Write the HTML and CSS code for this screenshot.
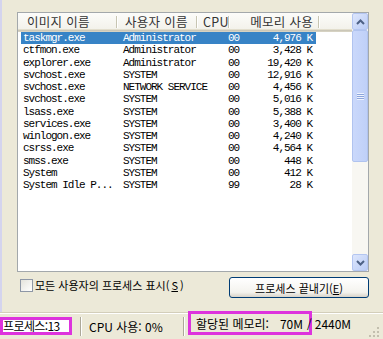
FILE: index.html
```html
<!DOCTYPE html>
<html lang="ko">
<head>
    <meta charset="UTF-8">
    <title>Windows 작업 관리자</title>
    <link rel="stylesheet" href="styles.css">
</head>
<body>

<div class="window">
    <div class="main">
        <!-- 프로세스 목록 -->
        <div class="list">
            <div class="list-body">
                <div class="header">
                    <div class="hcell c1">이미지 이름</div>
                    <div class="hcell c2">사용자 이름</div>
                    <div class="hcell c3">CPU</div>
                    <div class="hcell c4">메모리 사용</div>
                    <div class="hcell filler"></div>
                </div>
                <div class="rows">
                    <div class="row selected"><span>taskmgr.exe</span><span>Administrator</span><span>00</span><span class="mem">4,976 K</span></div>
                    <div class="row"><span>ctfmon.exe</span><span>Administrator</span><span>00</span><span class="mem">3,428 K</span></div>
                    <div class="row"><span>explorer.exe</span><span>Administrator</span><span>00</span><span class="mem">19,420 K</span></div>
                    <div class="row"><span>svchost.exe</span><span>SYSTEM</span><span>00</span><span class="mem">12,916 K</span></div>
                    <div class="row"><span>svchost.exe</span><span>NETWORK SERVICE</span><span>00</span><span class="mem">4,456 K</span></div>
                    <div class="row"><span>svchost.exe</span><span>SYSTEM</span><span>00</span><span class="mem">5,016 K</span></div>
                    <div class="row"><span>lsass.exe</span><span>SYSTEM</span><span>00</span><span class="mem">5,388 K</span></div>
                    <div class="row"><span>services.exe</span><span>SYSTEM</span><span>00</span><span class="mem">3,400 K</span></div>
                    <div class="row"><span>winlogon.exe</span><span>SYSTEM</span><span>00</span><span class="mem">4,240 K</span></div>
                    <div class="row"><span>csrss.exe</span><span>SYSTEM</span><span>00</span><span class="mem">4,564 K</span></div>
                    <div class="row"><span>smss.exe</span><span>SYSTEM</span><span>00</span><span class="mem">448 K</span></div>
                    <div class="row"><span>System</span><span>SYSTEM</span><span>00</span><span class="mem">412 K</span></div>
                    <div class="row"><span>System Idle P...</span><span>SYSTEM</span><span>99</span><span class="mem">28 K</span></div>
                </div>
            </div>
            <!-- 스크롤바 -->
            <div class="scrollbar">
                <div class="sb-btn">
                    <svg width="9" height="6" viewBox="0 0 9 6"><path d="M1 5 L4.5 1.5 L8 5" fill="none" stroke="#4D6185" stroke-width="2"/></svg>
                </div>
                <div class="sb-thumb">
                    <div class="grip"></div>
                </div>
                <div class="sb-track"></div>
                <div class="sb-btn">
                    <svg width="9" height="6" viewBox="0 0 9 6"><path d="M1 1 L4.5 4.5 L8 1" fill="none" stroke="#4D6185" stroke-width="2"/></svg>
                </div>
            </div>
        </div>

        <div class="controls">
            <label class="check"><span class="box"></span>모든 사용자의 프로세스 표시(<u>S</u>)</label>
            <button class="end-button">프로세스 끝내기(<u>E</u>)</button>
        </div>
    </div>

    <!-- 상태 표시줄 -->
    <div class="statusbar">
        <div class="panel p1"><span class="mark mark1">프로세스:13</span></div>
        <div class="sep"></div>
        <div class="panel p2">CPU 사용: 0%</div>
        <div class="sep"></div>
        <div class="panel p3">
            <span class="mark mark2"><span>할당된 메모리:</span><span>70M</span></span>
            <span class="slash">/</span>
            <span class="total">2440M</span>
        </div>
        <svg class="grip-corner" width="12" height="12" viewBox="0 0 12 12">
            <rect x="9" y="1" width="2" height="2" fill="#C3BFAE"/>
            <rect x="5" y="5" width="2" height="2" fill="#C3BFAE"/>
            <rect x="9" y="5" width="2" height="2" fill="#C3BFAE"/>
            <rect x="1" y="9" width="2" height="2" fill="#C3BFAE"/>
            <rect x="5" y="9" width="2" height="2" fill="#C3BFAE"/>
            <rect x="9" y="9" width="2" height="2" fill="#C3BFAE"/>
        </svg>
    </div>
</div>

</body>
</html>
```

FILE: styles.css
```css
/* General */
* {
    margin: 0;
    padding: 0;
    box-sizing: border-box;
}
body {
    font-family: "Noto Sans CJK KR", sans-serif;
    font-size: 11px;
    color: #000;
    background-color: #ECE9D8;
    width: 383px;
    height: 339px;
    overflow: hidden;
}
.window {
    height: 339px;
    display: flex;
    flex-direction: column;
}
.main {
    flex: 1;
    border-left: 2px solid #D4D4EE;
    padding: 12px 0 0 15px;
}

/* Lista */
.list {
    width: 352px;
    height: 260px;
    display: flex;
    background: #fff;
    border: 1px solid #A3A8AB;
}
.list-body {
    flex: 1;
    overflow: hidden;
}
.header {
    display: flex;
    height: 19px;
    background: linear-gradient(#FCFCFA, #F1F0E8);
    box-shadow: inset 0 -1px #D6D2C2, inset 0 -2px #CBC7B8, inset 0 -3px #E2DECD;
}
.hcell {
    position: relative;
    font-size: 12.5px;
    letter-spacing: 0.3px;
    line-height: 18px;
    color: #333;
    white-space: nowrap;
}
.hcell::after {
    content: "";
    position: absolute;
    right: 0;
    top: 3px;
    bottom: 4px;
    width: 1px;
    background: #C7C5B2;
    box-shadow: 1px 0 #fff;
}
.hcell.filler::after {
    display: none;
}
.c1 { width: 99px; padding-left: 9px; }
.c2 { width: 80px; padding-left: 8px; }
.c3 { width: 32px; padding-left: 6px; }
.c4 { width: 90px; padding-right: 6px; text-align: right; }
.filler { flex: 1; }

.rows {
    padding-left: 3px;
}
.row {
    width: 295px;
    height: 12.25px;
    display: grid;
    grid-template-columns: 102px 105px 23px 65px;
    font-family: "Liberation Mono", monospace;
    font-size: 11px;
    letter-spacing: -1px;
    line-height: 12px;
    white-space: nowrap;
}
.row span:first-child {
    padding-left: 2px;
}
.row .mem {
    text-align: right;
    padding-right: 4px;
}
.row.selected {
    background-color: #3783C6;
    color: #fff;
}

/* Scrollbar */
.scrollbar {
    width: 16px;
    display: flex;
    flex-direction: column;
    background: #F8F7F2;
}
.sb-btn {
    height: 17px;
    display: flex;
    align-items: center;
    justify-content: center;
    background: linear-gradient(135deg, #DDE6FC, #BBCDF6);
    border: 1px solid #B4C6F1;
    border-radius: 2px;
}
.sb-thumb {
    height: 132px;
    display: flex;
    align-items: center;
    justify-content: center;
    background: linear-gradient(90deg, #CAD8FB, #BFD0F8);
    border: 1px solid #B0C3EF;
    border-radius: 2px;
}
.grip {
    width: 7px;
    height: 7px;
    background: repeating-linear-gradient(#EEF3FE 0 1px, #8CA5DC 1px 2px);
}
.sb-track {
    flex: 1;
}

/* Controles */
.controls {
    width: 352px;
    height: 21px;
    margin-top: 5px;
    display: flex;
    justify-content: space-between;
}
.check {
    display: flex;
    align-items: center;
    gap: 2px;
    padding-left: 3px;
    margin-top: 1px;
    height: 14px;
    line-height: 14px;
}
.box {
    width: 13px;
    height: 13px;
    border: 1px solid #8E97A6;
    background: linear-gradient(135deg, #E4E3DC, #FFFFFF);
}
.end-button {
    width: 140px;
    height: 21px;
    font-family: inherit;
    font-size: 11px;
    border: 1px solid #003C74;
    border-radius: 3px;
    background: linear-gradient(#FFFFFF, #F4F3EE 75%, #D8D3C8);
}

/* Barra de estado */
.statusbar {
    height: 27px;
    display: flex;
    align-items: center;
    font-size: 12px;
    border-top: 1px solid #D3CEBA;
    box-shadow: inset 0 1px #fff;
}
.panel {
    white-space: nowrap;
}
.p1 {
    width: 80px;
}
.p2 {
    width: 101px;
    padding-left: 7px;
}
.p3 {
    display: flex;
    align-items: center;
    padding-left: 3px;
    align-self: flex-start;
    margin-top: -2px;
}
.sep {
    width: 2px;
    height: 19px;
    border-left: 1px solid #ACA899;
    border-right: 1px solid #fff;
}
.mark {
    display: flex;
    align-items: center;
    background: #fff;
    border: 3px solid #DD33DD;
}
.mark1 {
    width: 72px;
    height: 18px;
    letter-spacing: -0.6px;
    line-height: 12px;
}
.mark2 {
    width: 124px;
    height: 24px;
    justify-content: space-between;
    padding: 0 6px 0 5px;
    background: #ECE9D8;
}
.slash {
    position: relative;
    margin-left: -5px;
}
.total {
    margin-left: 3px;
}
.grip-corner {
    margin-left: auto;
    margin-right: 3px;
    align-self: flex-end;
    margin-bottom: 1px;
}
```
